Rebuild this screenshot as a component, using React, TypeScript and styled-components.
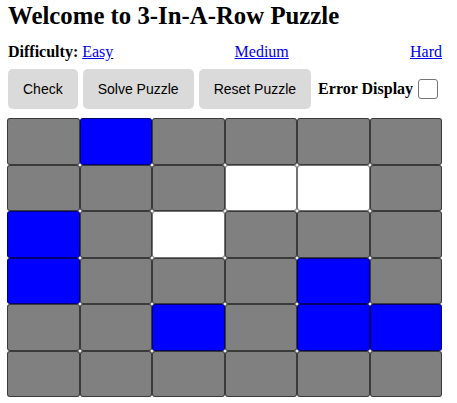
import React from "react";
import styled, { createGlobalStyle } from "styled-components";

const Global = createGlobalStyle`
  html, body { margin: 0; padding: 0; background: #fff; }
  body { font-family: "Liberation Serif", "Times New Roman", serif; color: #000; }
`;

const Page = styled.div`
  width: 434px;
  padding: 2px 0 0 8px;
`;

const Title = styled.h1`
  margin: 0;
  font-size: 24.8px;
  font-weight: bold;
  line-height: 28px;
`;

const DifficultyRow = styled.div`
  display: flex;
  justify-content: space-between;
  margin-top: 13px;
  font-size: 16px;
  line-height: 18px;
`;

const Label = styled.span`
  font-weight: bold;
`;

const Link = styled.a`
  color: #0000ee;
  text-decoration: underline;
  cursor: pointer;
`;

const Toolbar = styled.div`
  display: flex;
  align-items: center;
  gap: 5px;
  margin-top: 8px;
`;

const Button = styled.button`
  height: 40px;
  padding: 0 15px;
  border: none;
  border-radius: 5px;
  background: #dadada;
  font-family: "Liberation Sans", Arial, sans-serif;
  font-size: 14px;
  color: #000;
`;

const ErrorToggle = styled.label`
  display: flex;
  align-items: center;
  gap: 5px;
  margin-left: 2px;
  font-size: 16px;
  font-weight: bold;
`;

const Check = styled.input`
  appearance: none;
  width: 20px;
  height: 20px;
  margin: 0;
  border: 1px solid #767676;
  border-radius: 3px;
  background: #fff;
`;

const Board = styled.div`
  display: grid;
  grid-template-columns: repeat(6, 1fr);
  grid-auto-rows: 46.5px;
  width: 435px;
  margin: 9px 0 0 -1px;
`;

const colors: Record<string, string> = { G: "#808080", B: "#0000ff", W: "#ffffff" };

const Cell = styled.div<{ $c: string }>`
  background: ${(p) => colors[p.$c]};
  border: 1px solid rgba(0, 0, 0, 0.55);
  border-radius: 3px;
`;

const rows = ["GBGGGG", "GGGWWG", "BGWGGG", "BGGGBG", "GGBGBB", "GGGGGG"];

export default function App() {
  return (
    <>
      <Global />
      <Page>
        <Title>Welcome to 3-In-A-Row Puzzle</Title>
        <DifficultyRow>
          <span>
            <Label>Difficulty:</Label> <Link>Easy</Link>
          </span>
          <Link>Medium</Link>
          <Link>Hard</Link>
        </DifficultyRow>
        <Toolbar>
          <Button>Check</Button>
          <Button>Solve Puzzle</Button>
          <Button>Reset Puzzle</Button>
          <ErrorToggle>
            Error Display
            <Check type="checkbox" />
          </ErrorToggle>
        </Toolbar>
        <Board>
          {rows.flatMap((r, i) =>
            r.split("").map((c, j) => <Cell key={`${i}-${j}`} $c={c} />)
          )}
        </Board>
      </Page>
    </>
  );
}
